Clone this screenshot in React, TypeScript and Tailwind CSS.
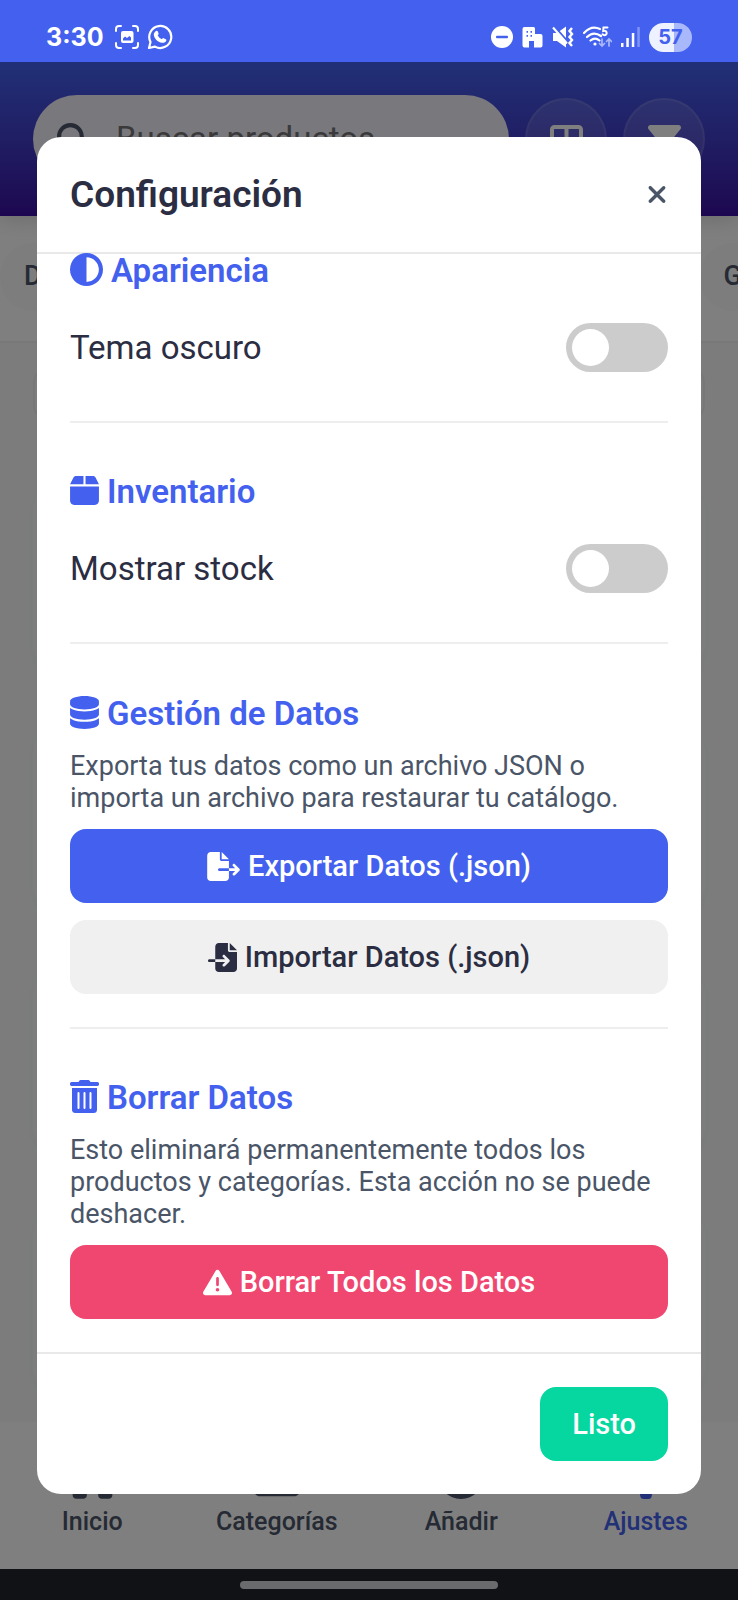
import { useState } from "react";
import type { ReactNode } from "react";
import {
  FaBox,
  FaCircleHalfStroke,
  FaCirclePlus,
  FaDatabase,
  FaFileExport,
  FaFileImport,
  FaFilter,
  FaFolder,
  FaGear,
  FaHouse,
  FaMagnifyingGlass,
  FaTriangleExclamation,
  FaXmark,
} from "react-icons/fa6";

function StatusBar() {
  return (
    <div className="relative z-20 flex h-[62px] items-center justify-between bg-[#4361ee] px-[46px] pt-3 text-white">
      <div className="flex items-center gap-2">
        <span className="mr-1 font-['Inter'] text-[25px] leading-8 font-bold">3:30</span>
        <svg width="24" height="24" viewBox="0 0 24 24" fill="none" stroke="currentColor" strokeWidth="2" strokeLinecap="round">
          <path d="M1 6V4a3 3 0 0 1 3-3h2M18 1h2a3 3 0 0 1 3 3v2M23 18v2a3 3 0 0 1-3 3h-2M6 23H4a3 3 0 0 1-3-3v-2" />
          <rect x="6" y="6" width="12.500" height="12" rx="2" fill="currentColor" stroke="none" />
          <path d="M8 15.500v-2l2-2 2 1.500 2.500-2 1.500 1.500v3z" fill="#4361ee" stroke="none" />
        </svg>
        <svg width="26" height="26" viewBox="0 0 26 26" fill="none">
          <path d="M2 24l1.500-6A11 11 0 1 1 8 22.600z" stroke="currentColor" strokeWidth="2.200" strokeLinejoin="round" />
          <path
            d="M9 7c.8-.4 1.500-.2 1.800.5l.8 1.900c.2.600-.1 1-.9 1.900.9 1.900 2.300 3.200 4.200 4 .8-1 1.100-1.400 1.800-1.100l2.100 1c.6.300.7.900.4 1.600-.7 1.600-2.500 2.300-4.200 2-4.500-.8-7.800-4.200-8.200-7.800C6.700 9.400 7.700 7.700 9 7z"
            fill="currentColor"
          />
        </svg>
      </div>
      <div className="flex items-center gap-[9px]">
        <svg width="22" height="22" viewBox="0 0 22 22">
          <circle cx="11" cy="11" r="11" fill="#fff" />
          <rect x="5" y="9.800" width="12" height="2.400" rx="1" fill="#4361ee" />
        </svg>
        <svg width="21" height="21" viewBox="0 0 21 21">
          <path d="M2.500 0h9Q13 0 13 1.500V7h5.500Q20.500 7 20.500 9v9.500q0 2-2 2H12V14H7v6.500H2.500q-2 0-2-2V2q0-2 2-2z" fill="#fff" />
          <path d="M4.500 4H6v1.800H4.500zM8.500 4H10v1.800H8.500zM4.500 8H6v1.800H4.500zM8.500 8H10v1.800H8.500z" fill="#4361ee" />
        </svg>
        <svg width="22" height="22" viewBox="0 0 22 22" fill="none">
          <path d="M1 7h4l9-6.500v21L5 15H1z" fill="#fff" />
          <path d="M2 0l15 17" stroke="#4361ee" strokeWidth="2" />
          <path d="M1 1.500l14 16" stroke="#fff" strokeWidth="2" />
          <path d="M20 2l-2.500 3L20 8l-2.500 3 2.500 3-2.500 3 2.500 3" stroke="#fff" strokeWidth="2.400" />
        </svg>
        <svg width="29" height="22" viewBox="0 0 29 22" fill="none" stroke="#fff" strokeWidth="2.200" strokeLinecap="round">
          <path d="M1 7C6 1.500 12 .5 17 3M4 11c4-4 9-4.500 14-1M7.500 14.500c3-2.500 6-2.500 9 0" />
          <circle cx="12" cy="18" r="1.600" fill="#fff" stroke="none" />
          <path d="M24.500 1.500h-4l-.3 3.500c4-1 4.600 4 1.500 4.200-1 0-1.700-.3-2.200-1" strokeWidth="2" />
          <path d="M19 13v7m-2.500-2.500L19 20l2.500-2.500M26 20v-7m-2.500 2.500L26 13l2.500 2.500" stroke="#a9b8fb" strokeWidth="1.700" />
        </svg>
        <svg width="19" height="22" viewBox="0 0 19 22">
          <path d="M0 17h2.500v4H0zM5.300 12h2.500v9H5.300zM10.800 7h2.500v14h-2.500z" fill="#fff" />
          <path d="M16.300 1h2.500v20h-2.500z" fill="#7f94f5" />
        </svg>
        <div className="flex h-[29px] w-[43px] items-center justify-center rounded-full bg-linear-to-r from-[#eef1ff] from-57% to-[#a9b8fb] to-57% font-['Inter'] text-xl leading-6 font-bold text-[#4361ee]">
          57
        </div>
      </div>
    </div>
  );
}

const roundButton =
  "flex size-[82px] items-center justify-center rounded-full border-2 border-white/10 bg-white/12 text-white";

function AppHeader() {
  return (
    <header className="relative z-10 flex h-[154px] items-center gap-4 bg-linear-to-b from-[#4361ee] to-[#3a0ca3] px-[33px] shadow-[0_4px_20px_rgba(0,0,0,0.15)]">
      <label className="flex h-[88px] min-w-0 flex-1 items-center gap-[26px] rounded-full bg-[#f2f0fb] pl-6">
        <FaMagnifyingGlass size={33} className="shrink-0 text-[#4a5568]" />
        <input
          type="search"
          aria-label="Buscar productos"
          placeholder="Buscar productos..."
          className="w-full min-w-0 bg-transparent text-[33px] outline-none placeholder:text-[#757575]"
        />
      </label>
      <button aria-label="Vista" className={roundButton}>
        <svg width="33" height="29" viewBox="0 0 33 29" fill="none" stroke="currentColor" strokeWidth="4">
          <rect x="2" y="2" width="29" height="25" rx="2.500" />
          <path d="M16.500 2v25" />
        </svg>
      </button>
      <button aria-label="Filtrar" className={roundButton}>
        <FaFilter size={33} />
      </button>
    </header>
  );
}

function TrashIcon() {
  return (
    <svg width="29" height="33" viewBox="0 0 29 33" fill="none">
      <path
        d="M1.500 2H8.500L9.300.8Q9.800 0 10.800 0h7.400q1 0 1.500.8L20.500 2h7Q29 2 29 3.500V4.600Q29 6 27.500 6h-26Q0 6 0 4.600V3.500Q0 2 1.500 2z"
        fill="currentColor"
      />
      <path d="M2 8h25v21.500q0 3.500-3.500 3.500h-18Q2 33 2 29.500z" fill="currentColor" />
      <path d="M8.500 13v15M14.500 13v15M20.500 13v15" stroke="#fff" strokeWidth="2" strokeLinecap="round" />
    </svg>
  );
}

function Switch({ id }: { id: string }) {
  const [on, setOn] = useState(false);
  return (
    <input
      id={id}
      type="checkbox"
      role="switch"
      checked={on}
      onChange={() => setOn(!on)}
      className="h-[49px] w-[102px] cursor-pointer appearance-none rounded-full bg-[#ccc] p-1.5 before:block before:size-[37px] before:rounded-full before:bg-white before:content-[''] checked:bg-[#4361ee] checked:before:ml-[53px]"
    />
  );
}

function SectionTitle({ icon, children }: { icon: ReactNode; children: ReactNode }) {
  return (
    <h3 className="flex h-[34px] items-center gap-2 text-[33px] leading-[34px] font-semibold text-[#4361ee]">
      <span className="mb-[3px]">{icon}</span>
      {children}
    </h3>
  );
}

const actionButton =
  "flex h-[74px] w-full items-center justify-center gap-2 rounded-2xl text-[29px] leading-8 font-medium";
const description = "mt-[19px] mb-[15px] text-[27px] leading-8 text-[#4a5568]";
const switchRow = "mt-[35px] flex items-center justify-between text-[33px] leading-10";

function SettingsDialog() {
  return (
    <section role="dialog" aria-labelledby="dialog-title" className="w-full overflow-hidden rounded-3xl bg-white text-[#2b2d42]">
      <div className="flex h-[117px] items-center justify-between border-b-2 border-[#e9e9e9] px-[33px]">
        <h2 id="dialog-title" className="text-[37px] leading-11 font-semibold">Configuración</h2>
        <button aria-label="Cerrar" className="text-[#4a5568]">
          <FaXmark className="h-[27px] w-[22px]" />
        </button>
      </div>
      <div className="px-[33px]">
        <div className="border-b-2 border-[#eee] pb-[49px]">
          <SectionTitle icon={<FaCircleHalfStroke className="size-[33px]" />}>Apariencia</SectionTitle>
          <div className={switchRow}>
            <label htmlFor="dark">Tema oscuro</label>
            <Switch id="dark" />
          </div>
        </div>
        <div className="border-b-2 border-[#eee] pt-[52px] pb-[49px]">
          <SectionTitle icon={<FaBox className="h-[33px] w-[29px]" />}>Inventario</SectionTitle>
          <div className={switchRow}>
            <label htmlFor="stock">Mostrar stock</label>
            <Switch id="stock" />
          </div>
        </div>
        <div className="border-b-2 border-[#eee] pt-[53px] pb-[33px]">
          <SectionTitle icon={<FaDatabase className="h-[33px] w-[29px]" />}>Gestión de Datos</SectionTitle>
          <p className={description}>
            Exporta tus datos como un archivo JSON o importa un archivo para restaurar tu catálogo.
          </p>
          <button className={`${actionButton} bg-[#4361ee] text-white`}>
            <FaFileExport className="h-[29px] w-[33px]" />
            Exportar Datos (.json)
          </button>
          <button className={`${actionButton} mt-[17px] bg-[#f0f0f0]`}>
            <FaFileImport className="size-[29px]" />
            Importar Datos (.json)
          </button>
        </div>
        <div className="pt-[52px] pb-[33px]">
          <SectionTitle icon={<TrashIcon />}>Borrar Datos</SectionTitle>
          <p className={description}>
            Esto eliminará permanentemente todos los productos y categorías. Esta acción no se puede deshacer.
          </p>
          <button className={`${actionButton} bg-[#ef476f] text-white`}>
            <FaTriangleExclamation className="size-[29px]" />
            Borrar Todos los Datos
          </button>
        </div>
      </div>
      <div className="flex justify-end border-t-2 border-[#e9e9e9] p-[33px]">
        <button className="h-[74px] rounded-2xl bg-[#06d6a0] px-8 text-[29px] leading-8 font-medium text-white">Listo</button>
      </div>
    </section>
  );
}

const tabs = [
  { label: "Inicio", icon: <FaHouse className="h-[46px] w-[51px]" />, color: "text-[#4a5568]" },
  { label: "Categorías", icon: <FaFolder className="size-[46px]" />, color: "text-[#4a5568]" },
  { label: "Añadir", icon: <FaCirclePlus className="size-[46px]" />, color: "text-[#4a5568]" },
  { label: "Ajustes", icon: <FaGear className="size-[46px]" />, color: "text-[#4361ee]" },
];

const chip = "h-[68px] shrink-0 rounded-full bg-[#fafafa] px-6 text-[27px] font-medium text-[#4a5568]";

export default function App() {
  return (
    <div className="relative flex min-h-screen flex-col overflow-hidden bg-[#f8f9fa] font-['Roboto',sans-serif]">
      <StatusBar />
      <AppHeader />
      <div className="flex h-[127px] items-center justify-between border-b-2 border-[#f0f0f0] bg-white pb-1">
        <button className={chip}>D</button>
        <button className={`${chip} -mr-7`}>G</button>
      </div>
      <main className="flex flex-1 flex-col px-[33px] pt-6">
        <div className="mb-[66px] h-[54px] rounded-2xl border-2 border-[#eee] bg-[#f9fafb]" />
        <div className="flex flex-col gap-[59px]">
          {[0, 1, 2, 3].map((card) => (
            <div key={card} className="h-[182px] rounded-3xl bg-[#fafbfc] shadow-[0_4px_12px_rgba(0,0,0,0.03)]" />
          ))}
        </div>
      </main>
      <nav className="grid h-[147px] grid-cols-4 bg-white">
        {tabs.map((tab) => (
          <a key={tab.label} href="#" className={`flex flex-col items-center justify-end gap-2 pb-8 text-[25px] leading-[30px] font-medium ${tab.color}`}>
            {tab.icon}
            {tab.label}
          </a>
        ))}
      </nav>
      <div className="relative z-20 flex h-[31px] items-center justify-center bg-[#111216]">
        <span className="h-2 w-[258px] rounded-full bg-[#6a6b6d]" />
      </div>
      <div className="absolute inset-0 z-10 flex items-start bg-black/50 px-[37px] pt-[137px]">
        <SettingsDialog />
      </div>
    </div>
  );
}
